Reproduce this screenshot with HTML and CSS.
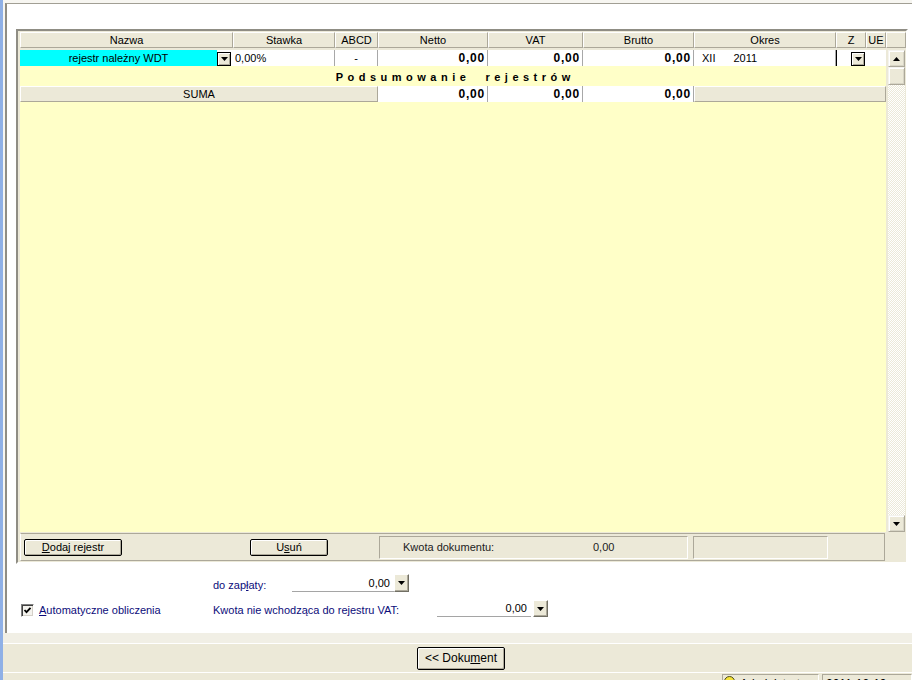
FILE: index.html
```html
<!DOCTYPE html>
<html lang="pl">
<head>
<meta charset="utf-8">
<title>Rejestry VAT</title>
<link rel="stylesheet" href="styles.css">
</head>
<body>
<div class="app">
  <div class="edge"></div>
  <div class="main">
    <div class="content">
      <div class="frame">
        <div class="head">
          <div class="hc">Nazwa</div>
          <div class="hc">Stawka</div>
          <div class="hc">ABCD</div>
          <div class="hc">Netto</div>
          <div class="hc">VAT</div>
          <div class="hc">Brutto</div>
          <div class="hc">Okres</div>
          <div class="hc">Z</div>
          <div class="hc">UE</div>
          <div class="hc"></div>
        </div>
        <div class="body">
          <div class="table">
            <div class="row">
              <div class="c name">
                <span class="cyan">rejestr należny WDT</span>
                <span class="dd"><svg width="7" height="4" viewBox="0 0 7 4"><polygon points="0,0 7,0 3.5,4" fill="#000"/></svg></span>
              </div>
              <div class="c">0,00%</div>
              <div class="c mid">-</div>
              <div class="c num">0,00</div>
              <div class="c num">0,00</div>
              <div class="c num">0,00</div>
              <div class="c okres"><span>XII</span><span class="year">2011</span></div>
              <div class="c zc"><span class="dd"><svg width="7" height="4" viewBox="0 0 7 4"><polygon points="0,0 7,0 3.5,4" fill="#000"/></svg></span></div>
              <div class="c ue"></div>
            </div>
            <div class="title">Podsumowanie  rejestrów</div>
            <div class="row sum">
              <div class="g suma">SUMA</div>
              <div class="c num">0,00</div>
              <div class="c num">0,00</div>
              <div class="c num">0,00</div>
              <div class="g rest"></div>
            </div>
          </div>
          <div class="vscroll">
            <div class="sbtn"><svg width="7" height="4" viewBox="0 0 7 4"><polygon points="0,4 7,4 3.5,0" fill="#000"/></svg></div>
            <div class="thumb"></div>
            <div class="track"></div>
            <div class="sbtn"><svg width="7" height="4" viewBox="0 0 7 4"><polygon points="0,0 7,0 3.5,4" fill="#000"/></svg></div>
          </div>
        </div>
        <div class="bar">
          <button class="btn add"><u>D</u>odaj rejestr</button>
          <button class="btn del">U<u>s</u>uń</button>
          <div class="box amount"><span class="amount-label">Kwota dokumentu:</span><span>0,00</span></div>
          <div class="box empty"></div>
        </div>
      </div>
      <div class="form">
        <div class="frow a">
          <span class="lbl la">do zap<u>ł</u>aty:</span>
          <span class="field fa">0,00</span>
          <span class="ddb"><svg width="7" height="4" viewBox="0 0 7 4"><polygon points="0,0 7,0 3.5,4" fill="#000"/></svg></span>
        </div>
        <div class="frow b">
          <label class="chk">
            <span class="cb"><svg width="9" height="9" viewBox="0 0 9 9"><polyline points="1.5,4 3.5,6.2 7.5,1.8" fill="none" stroke="#000" stroke-width="1.8"/></svg></span>
            <span class="lbl"><u>A</u>utomatyczne obliczenia</span>
          </label>
          <span class="lbl lb">Kwota nie wchodząca do rejestru VAT:</span>
          <span class="field fb">0,00</span>
          <span class="ddb"><svg width="7" height="4" viewBox="0 0 7 4"><polygon points="0,0 7,0 3.5,4" fill="#000"/></svg></span>
        </div>
      </div>
    </div>
    <div class="strip"></div>
    <div class="footer">
      <button class="btn doc">&lt;&lt; Doku<u>m</u>ent</button>
    </div>
    <div class="status">
      <div class="panel user"><span class="ico"></span><span>Administrator</span></div>
      <div class="panel date">2011-12-19</div>
    </div>
  </div>
</div>
</body>
</html>
```
FILE: styles.css
```css
* { box-sizing: border-box; }
html, body { margin: 0; padding: 0; }
body {
  width: 912px;
  height: 680px;
  overflow: hidden;
  font-family: "Liberation Sans", Arial, sans-serif;
  font-size: 11px;
  color: #000;
  background: #ece9d8;
}
u { text-decoration: underline; text-underline-offset: 1px; }

.app { display: flex; height: 680px; }
.edge { width: 3px; flex: none; background: #8fb0e6; }
.main { flex: 1; min-width: 0; display: flex; flex-direction: column; background: #f7f6f1; }

.content {
  flex: none;
  height: 630px;
  margin-top: 3px;
  margin-left: 2px;
  background: #fff;
  border-top: 1px solid #a19f94;
  border-left: 2px solid #8f8d84;
  padding: 25px 0 0 0;
}

/* grid frame */
.frame {
  width: 892px;
  height: 535px;
  margin-left: 9px;
  background: #ece9d8;
  border: 2px solid;
  border-color: #8f8d84 #fff #fff #8f8d84;
  padding: 1px 0 0 2px;
  display: flex;
  flex-direction: column;
}
.head {
  display: grid;
  grid-template-columns: 213px 102px 43px 110px 95px 111px 142px 30px 20px 20px;
  height: 16px;
  margin-bottom: 2px;
}
.hc {
  border: 1px solid;
  border-color: #fff #aca899 #aca899 #fff;
  display: flex;
  align-items: center;
  justify-content: center;
  white-space: nowrap;
  overflow: hidden;
  line-height: 12px;
}

.body { display: flex; height: 482px; }
.table {
  width: 866px;
  background: #ffffc8;
  display: flex;
  flex-direction: column;
}
.row {
  display: grid;
  grid-template-columns: 213px 102px 43px 110px 95px 111px 142px 30px 20px;
  height: 16px;
}
.c {
  background: #fff;
  border-right: 1px solid #a8a8a8;
  display: flex;
  align-items: center;
  padding: 0 2px;
  white-space: nowrap;
  overflow: hidden;
  line-height: 12px;
}
.c.mid { justify-content: center; }
.c.num {
  justify-content: flex-end;
  font-weight: bold;
  font-size: 12px;
  letter-spacing: 0.8px;
  padding-right: 2px;
}
.c.name { padding: 0 2px 0 0; border-right: none; align-items: stretch; }
.cyan {
  flex: 1;
  background: #00ffff;
  display: flex;
  align-items: center;
  justify-content: center;
}
.dd {
  width: 14px;
  height: 14px;
  align-self: flex-end;
  border: 1px solid #000;
  background: #ece9d8;
  box-shadow: inset 1px 1px #fff, inset -1px -1px #aca899;
  display: flex;
  align-items: center;
  justify-content: center;
  flex: none;
}
.c.okres { padding-left: 8px; }
.year { margin-left: 18px; }
.c.zc {
  border-left: 1px solid #000;
  border-right: none;
  justify-content: flex-end;
  align-items: flex-end;
  padding: 0 1px 0 0;
}
.c.ue { border-right: none; }

.title {
  margin-top: 3px;
  height: 16px;
  line-height: 16px;
  text-align: center;
  white-space: pre;
  font-weight: bold;
  letter-spacing: 4.5px;
  padding-left: 4.5px;
}
.row.sum { margin-top: 1px; }
.g {
  background: #ece9d8;
  border: 1px solid;
  border-color: #fff #aca899 #aca899 #fff;
  display: flex;
  align-items: center;
  justify-content: center;
  line-height: 12px;
}
.g.suma { grid-column: 1 / 4; }
.g.rest { grid-column: 7 / 10; }

/* scrollbar */
.vscroll {
  width: 17px;
  margin-left: 2px;
  display: flex;
  flex-direction: column;
}
.sbtn, .thumb {
  height: 17px;
  flex: none;
  background: #ece9d8;
  border: 1px solid;
  border-color: #f4f3ee #aca899 #aca899 #f4f3ee;
  box-shadow: inset 1px 1px #fff, inset -1px -1px #d8d5c6;
  display: flex;
  align-items: center;
  justify-content: center;
}
.thumb { height: 18px; }
.track {
  flex: 1;
  background: repeating-conic-gradient(#fff 0 25%, #ece9d8 0 50%) 0 0 / 2px 2px;
}

/* bottom bar */
.bar {
  width: 865px;
  height: 28px;
  margin-top: 1px;
  border: 1px solid;
  border-color: #aca899 #aca899 #aca899 #fff;
  display: flex;
  align-items: center;
  padding-left: 3px;
}
.btn {
  font: inherit;
  color: #000;
  height: 17px;
  padding: 0;
  border: 1px solid #000;
  border-radius: 2px;
  background: #ece9d8;
  box-shadow: inset 1px 1px #fff, inset -1px -1px #aca899;
  display: flex;
  align-items: center;
  justify-content: center;
  line-height: 12px;
}
.btn.add { width: 98px; }
.btn.del { width: 78px; margin-left: 128px; }
.box {
  height: 23px;
  border: 1px solid;
  border-color: #aca899 #fff #fff #aca899;
  display: flex;
  align-items: center;
}
.box.amount { width: 309px; margin-left: 51px; padding-left: 23px; color: #222; }
.amount-label { width: 190px; }
.box.empty { width: 135px; margin-left: 5px; }

/* form below grid */
.form { padding-top: 10px; }
.frow { display: flex; align-items: flex-end; }
.frow.a { height: 18px; padding-left: 206px; }
.frow.b { height: 17px; margin-top: 8px; }
.lbl { color: #0c0c7a; line-height: 13px; white-space: nowrap; }
.lbl.la { width: 79px; }
.lbl.lb { width: 224px; }
.chk { width: 206px; padding-left: 14px; display: flex; align-items: center; gap: 5px; }
.cb {
  width: 13px;
  height: 13px;
  border: 1px solid;
  border-color: #808080 #fff #fff #808080;
  box-shadow: inset 1px 1px #404040, inset -1px -1px #d4d0c8;
  background: #f4f3ee;
  display: flex;
  align-items: center;
  justify-content: center;
}
.field {
  height: 100%;
  border-bottom: 1px solid #a5a5a5;
  display: flex;
  align-items: center;
  justify-content: flex-end;
  padding-right: 4px;
}
.field.fa { width: 102px; }
.field.fb { width: 94px; margin-right: 2px; }
.ddb {
  width: 15px;
  height: 17px;
  background: #ece9d8;
  border: 1px solid;
  border-color: #fff #716f64 #716f64 #fff;
  box-shadow: inset -1px -1px #aca899;
  display: flex;
  align-items: center;
  justify-content: center;
}
.frow.a .ddb { height: 18px; }

/* footer */
.strip { height: 10px; flex: none; background: #f1efe5; }
.footer {
  height: 29px;
  flex: none;
  background: #ece9d8;
  border-top: 1px solid #fff;
  display: flex;
  align-items: center;
  padding-left: 414px;
}
.btn.doc { width: 88px; height: 23px; font-size: 12px; }
.status {
  height: 8px;
  flex: none;
  background: #ece9d8;
  border-top: 1px solid #fff;
  display: flex;
  justify-content: flex-end;
  overflow: hidden;
}
.panel {
  height: 18px;
  margin-top: 1px;
  border: 1px solid;
  border-color: #aca899 #fff #fff #aca899;
  display: flex;
  align-items: flex-start;
  white-space: nowrap;
  overflow: hidden;
  font-size: 12px;
  line-height: 14px;
  padding-top: 2px;
}
.panel.user { width: 97px; margin-right: 3px; padding-left: 1px; gap: 5px; }
.panel.date { width: 90px; padding-left: 3px; }
.ico {
  width: 11px;
  height: 11px;
  margin-top: -1px;
  border-radius: 50%;
  background: #f5e33a;
  border: 1px solid #4a4a20;
  flex: none;
}
```
